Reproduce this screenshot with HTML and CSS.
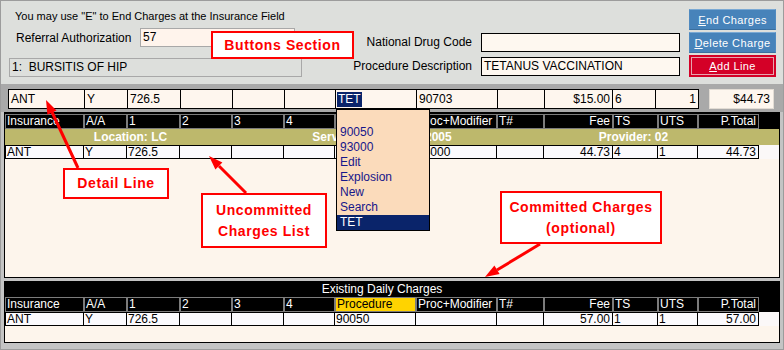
FILE: index.html
```html
<!DOCTYPE html>
<html lang="en">
<head>
  <meta charset="UTF-8" />
  <title>Charge Entry</title>
  <link rel="stylesheet" href="styles.css">
</head>
<body>
  <div class="window">
    <!-- header fields and buttons -->
    <div class="top">
      <div class="left">
        <div class="note">You may use "E" to End Charges at the Insurance Field</div>
        <div class="ref-row">
          <span class="ref-label">Referral Authorization</span>
          <div class="input ref-input">57</div>
        </div>
        <div class="diag">1:&nbsp; BURSITIS OF HIP</div>
      </div>
      <div class="mid">
        <div class="field-row">
          <span class="field-label">National Drug Code</span>
          <div class="input"></div>
        </div>
        <div class="field-row">
          <span class="field-label">Procedure Description</span>
          <div class="input">TETANUS VACCINATION</div>
        </div>
      </div>
      <div class="buttons">
        <button class="btn blue"><u>E</u>nd Charges</button>
        <button class="btn blue"><u>D</u>elete Charge</button>
        <button class="btn red"><u>A</u>dd Line</button>
      </div>
    </div>

    <!-- detail line -->
    <div class="detail">
      <div class="dcells">
        <div class="dcell">ANT</div>
        <div class="dcell">Y</div>
        <div class="dcell">726.5</div>
        <div class="dcell"></div>
        <div class="dcell"></div>
        <div class="dcell"></div>
        <div class="dcell"><span class="sel">TET</span></div>
        <div class="dcell">90703</div>
        <div class="dcell"></div>
        <div class="dcell num">$15.00</div>
        <div class="dcell">6</div>
        <div class="dcell num">1</div>
      </div>
      <div class="total">$44.73</div>
    </div>

    <div class="lower">
      <!-- uncommitted charges (procedure column sits under the dropdown) -->
      <div class="panel charges">
        <div class="grid head">
          <div>Insurance</div><div>A/A</div><div>1</div><div>2</div><div>3</div><div>4</div>
          <div></div><div>Proc+Modifier</div><div>T#</div><div class="num">Fee</div>
          <div>TS</div><div>UTS</div><div class="num">P.Total</div>
        </div>
        <div class="band">
          <span>Location: LC</span>
          <span>Service Date: 03/14/2005</span>
          <span>Provider: 02</span>
        </div>
        <div class="grid data">
          <div>ANT</div><div>Y</div><div>726.5</div><div></div><div></div><div></div>
          <div></div><div>93000</div><div></div><div class="num">44.73</div>
          <div>4</div><div>1</div><div class="num">44.73</div>
        </div>
        <div class="fill"></div>
      </div>

      <!-- existing daily charges -->
      <div class="panel existing">
        <div class="title"><span>Existing Daily Charges</span></div>
        <div class="grid head">
          <div>Insurance</div><div>A/A</div><div>1</div><div>2</div><div>3</div><div>4</div>
          <div class="active">Procedure</div><div>Proc+Modifier</div><div>T#</div><div class="num">Fee</div>
          <div>TS</div><div>UTS</div><div class="num">P.Total</div>
        </div>
        <div class="grid data">
          <div>ANT</div><div>Y</div><div>726.5</div><div></div><div></div><div></div>
          <div>90050</div><div></div><div></div><div class="num">57.00</div>
          <div>1</div><div>1</div><div class="num">57.00</div>
        </div>
        <div class="fill"></div>
      </div>
    </div>
  </div>

  <!-- procedure dropdown -->
  <ul class="dropdown">
    <li></li>
    <li>90050</li>
    <li>93000</li>
    <li>Edit</li>
    <li>Explosion</li>
    <li>New</li>
    <li>Search</li>
    <li class="picked">TET</li>
  </ul>

  <!-- annotation callouts -->
  <svg class="arrows" width="784" height="350" viewBox="0 0 784 350">
    <g stroke="#ff0000" stroke-width="3" fill="#ff0000">
      <line x1="78" y1="168" x2="52" y2="112" />
      <polygon stroke="none" points="46,100 56.5,110.5 47.4,114.8" />
      <line x1="246" y1="193" x2="219" y2="166" />
      <polygon stroke="none" points="209,156 222.4,162.4 215.4,169.4" />
      <line x1="540" y1="244" x2="497" y2="270" />
      <polygon stroke="none" points="485,277 499.6,274.1 494.4,265.5" />
    </g>
  </svg>
  <div class="callout buttons-note">Buttons Section</div>
  <div class="callout detail-note">Detail Line</div>
  <div class="callout list-note">Uncommitted<br>Charges List</div>
  <div class="callout committed-note">Committed Charges<br>(optional)</div>
</body>
</html>
```

FILE: styles.css
```css
* {
  box-sizing: border-box;
}

body {
  margin: 0;
  width: 784px;
  height: 350px;
  position: relative;
  overflow: hidden;
  font-family: "Liberation Sans", Arial, sans-serif;
  font-size: 12px;
  color: #000;
}

.window {
  width: 784px;
  height: 350px;
  border: 1px solid #9c9c9c;
  background: #dddfdc;
  overflow: hidden;
}

/* top area */
.top {
  display: flex;
  height: 83px;
}

.left {
  width: 302px;
  padding: 9px 0 0 8px;
}

.note {
  font-size: 11px;
  line-height: 13px;
  padding-left: 6px;
}

.ref-row {
  display: flex;
  margin-top: 5px;
}

.ref-label {
  width: 131px;
  padding-left: 7px;
  line-height: 20px;
}

.input {
  height: 19px;
  border: 1px solid #000;
  background: #fef8f0;
  padding-left: 2px;
  line-height: 17px;
  white-space: nowrap;
}

.ref-input {
  width: 155px;
  border-color: #a8a8a8;
  background: #fff4ec;
}

.diag {
  width: 293px;
  height: 19px;
  margin-top: 10px;
  border: 1px solid #a8a8a8;
  padding-left: 2px;
  line-height: 17px;
}

.mid {
  flex: 1;
  padding-top: 32px;
  display: flex;
  flex-direction: column;
  gap: 5px;
}

.field-row {
  display: flex;
}

.field-label {
  flex: 1;
  text-align: right;
  padding-right: 9px;
  line-height: 19px;
}

.field-row .input {
  width: 199px;
  margin-right: 9px;
}

.buttons {
  width: 87px;
  margin-right: 7px;
  padding-top: 8px;
  display: flex;
  flex-direction: column;
  gap: 2px;
}

.btn {
  height: 21px;
  padding: 0;
  font-family: "Liberation Sans", Arial, sans-serif;
  font-size: 11px;
  letter-spacing: 0.4px;
  color: #fff;
  cursor: pointer;
}

.btn.blue {
  background: #4783ba;
  border: 1px solid #4f8ac0;
  border-top-color: #7aa9d4;
  border-bottom-color: #3a6f9f;
}

.btn.red {
  height: 22px;
  background: #d40027;
  border: 2px solid #d40027;
  box-shadow: inset 0 0 0 1px #e6a5ae;
}

/* detail line */
.detail {
  display: flex;
  height: 28px;
  padding: 5px 0 0 7px;
  background: #a9a9a9;
}

.dcells {
  display: grid;
  grid-template-columns: 77px 43px 53px 52px 52px 51px 81px 81px 47px 68px 43px 43px;
  height: 20px;
}

.dcell {
  border: 1px solid #000;
  border-left: none;
  background: #fef6ee;
  padding: 0 2px;
  line-height: 18px;
  white-space: nowrap;
  overflow: hidden;
}

.dcell:first-child {
  border-left: 1px solid #000;
}

.num {
  text-align: right;
}

.sel {
  background: #0a246a;
  color: #fff;
  display: inline-block;
  line-height: 15px;
  padding: 0 1px;
  margin-left: -1px;
}

.total {
  width: 65px;
  height: 20px;
  margin-left: 10px;
  border: 1px solid #e2dcd4;
  background: #fdf6ee;
  text-align: right;
  padding-right: 3px;
  line-height: 18px;
}

/* charge panels */
.lower {
  background: #c4c4c4;
  padding: 0 3px;
  height: 237px;
}

.panel {
  border: 1px solid #000;
  background: #fdf5ec;
}

.charges {
  height: 166px;
}

.existing {
  margin-top: 3px;
  height: 62px;
}

.grid {
  display: grid;
  grid-template-columns: 79px 43px 53px 52px 52px 51px 81px 81px 47px 69px 45px 40px 61px 1fr;
}

.grid div {
  padding: 0 2px 0 1px;
  white-space: nowrap;
  overflow: hidden;
}

.head {
  height: 16px;
  padding-top: 1px;
  background: #000;
}

.head div {
  height: 15px;
  border: 1px solid #7c7c7c;
  color: #fff;
  line-height: 13px;
}

.head div.active {
  background: #ffd300;
  color: #000;
}

.existing .head {
  height: 15px;
  padding-top: 0;
}

.band {
  display: grid;
  grid-template-columns: 251px 252px 251px 1fr;
  height: 16px;
  background: #bdb86c;
  color: #fff;
  font-weight: bold;
  line-height: 16px;
  text-align: center;
}

.data {
  height: 14px;
  background: #fbf8f8;
}

.data div {
  height: 14px;
  border: 1px solid #000;
  border-left: none;
  background: #fbfafd;
  line-height: 12px;
}

.data div:first-child {
  border-left: 1px solid #000;
}

.data div:nth-child(14) {
  border: none;
}

.title {
  height: 15px;
  background: #000;
  color: #fff;
}

.title span {
  display: block;
  width: 754px;
  text-align: center;
  line-height: 15px;
}

/* dropdown over the detail line */
.dropdown {
  position: absolute;
  left: 336px;
  top: 109px;
  width: 94px;
  margin: 0;
  padding: 0;
  list-style: none;
  border: 1px solid #000;
  background: #fbdbbb;
}

.dropdown li {
  height: 15px;
  line-height: 15px;
  padding-left: 3px;
  color: #16168a;
  font-size: 12px;
}

.dropdown li.picked {
  background: #0a246a;
  color: #fff;
}

/* annotations */
.arrows {
  position: absolute;
  left: 0;
  top: 0;
  pointer-events: none;
}

.callout {
  position: absolute;
  border: 2px solid #ff0000;
  background: #fff;
  color: #ff0000;
  font-weight: bold;
  font-size: 14px;
  letter-spacing: 0.6px;
  text-align: center;
  display: flex;
  align-items: center;
  justify-content: center;
  line-height: 21px;
}

.buttons-note {
  left: 211px;
  top: 31px;
  width: 143px;
  height: 28px;
}

.detail-note {
  left: 63px;
  top: 168px;
  width: 106px;
  height: 31px;
}

.list-note {
  left: 201px;
  top: 193px;
  width: 126px;
  height: 55px;
}

.committed-note {
  left: 500px;
  top: 191px;
  width: 162px;
  height: 53px;
}
```
